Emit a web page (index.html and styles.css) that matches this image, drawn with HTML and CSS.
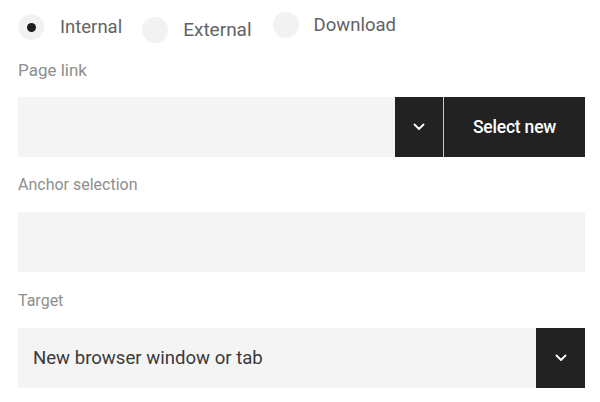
FILE: index.html
```html
<!DOCTYPE html>
<html lang="en">
<head>
<meta charset="utf-8">
<title>Link settings</title>
<link rel="stylesheet" href="styles.css">
</head>
<body>
<form class="form">
  <div class="radios">
    <label class="radio radio-a"><span class="dot checked"></span><span class="radio-text">Internal</span></label>
    <label class="radio radio-b"><span class="dot"></span><span class="radio-text">External</span></label>
    <label class="radio radio-c"><span class="dot"></span><span class="radio-text">Download</span></label>
  </div>

  <div class="field first">
    <div class="label label-page">Page link</div>
    <div class="row">
      <div class="input grow"></div>
      <div class="btn-group">
        <button type="button" class="icon-btn">
          <svg width="12" height="8" viewBox="0 0 12 8"><path d="M1.5 1.5 L6 6 L10.5 1.5" fill="none" stroke="#fff" stroke-width="1.8" stroke-linecap="round" stroke-linejoin="round"/></svg>
        </button>
        <button type="button" class="text-btn">Select new</button>
      </div>
    </div>
  </div>

  <div class="field">
    <div class="label">Anchor selection</div>
    <div class="input"></div>
  </div>

  <div class="field last">
    <div class="label">Target</div>
    <div class="row">
      <div class="input grow value">New browser window or tab</div>
      <button type="button" class="icon-btn narrow">
        <svg width="12" height="8" viewBox="0 0 12 8"><path d="M1.5 1.5 L6 6 L10.5 1.5" fill="none" stroke="#fff" stroke-width="1.8" stroke-linecap="round" stroke-linejoin="round"/></svg>
      </button>
    </div>
  </div>
</form>
</body>
</html>
```

FILE: styles.css
```css
html, body {
  margin: 0;
  padding: 0;
  background: #ffffff;
}

body {
  font-family: Roboto, "Liberation Sans", Arial, sans-serif;
  width: 600px;
  height: 402px;
  overflow: hidden;
}

.form {
  margin: 0;
  padding: 0 15px 0 18px;
  width: 567px;
  display: flex;
  flex-direction: column;
}

.radios {
  display: flex;
  align-items: flex-start;
  padding-top: 12px;
  height: 31px;
}

.radio {
  display: flex;
  align-items: center;
  height: 26px;
}

.radio-a { margin-top: 2px; }
.radio-b { margin-top: 5px; margin-left: 20px; }
.radio-c { margin-top: 0; margin-left: 21px; }

.dot {
  width: 26px;
  height: 26px;
  border-radius: 50%;
  background: #f2f2f2;
  display: flex;
  align-items: center;
  justify-content: center;
  flex: none;
}

.dot.checked::after {
  content: "";
  width: 9px;
  height: 9px;
  border-radius: 50%;
  background: #1e1e1e;
}

.radio-text {
  font-size: 18.5px;
  color: #636363;
  margin-left: 16px;
  line-height: 22px;
}

.radio-b .radio-text { margin-left: 15px; font-size: 19px; }
.radio-c .radio-text { margin-left: 15px; }

.field {
  display: flex;
  flex-direction: column;
  margin-top: 18px;
}

.field.first {
  margin-top: 17px;
}

.field.last {
  margin-top: 19px;
}

.label {
  font-size: 16px;
  line-height: 20px;
  color: #8e8e8e;
  margin-bottom: 17px;
}

.label-page {
  font-size: 17px;
}

.row {
  display: flex;
}

.input {
  height: 60px;
  background: #f4f4f4;
}

.grow {
  flex: 1;
}

.value {
  display: flex;
  align-items: center;
  padding-left: 15px;
  font-size: 18.6px;
  color: #3a3a3a;
}

.btn-group {
  display: flex;
  gap: 1px;
  background: #c8c8c8;
}

.icon-btn {
  width: 48px;
  height: 60px;
  border: none;
  padding: 0;
  margin: 0;
  background: #222222;
  display: flex;
  align-items: center;
  justify-content: center;
}

.icon-btn.narrow {
  width: 49px;
}

.text-btn {
  width: 141px;
  height: 60px;
  border: none;
  padding: 0;
  margin: 0;
  background: #222222;
  color: #ffffff;
  font-family: Roboto, "Liberation Sans", Arial, sans-serif;
  font-size: 17.5px;
  font-weight: 500;
  letter-spacing: -0.2px;
}
```
